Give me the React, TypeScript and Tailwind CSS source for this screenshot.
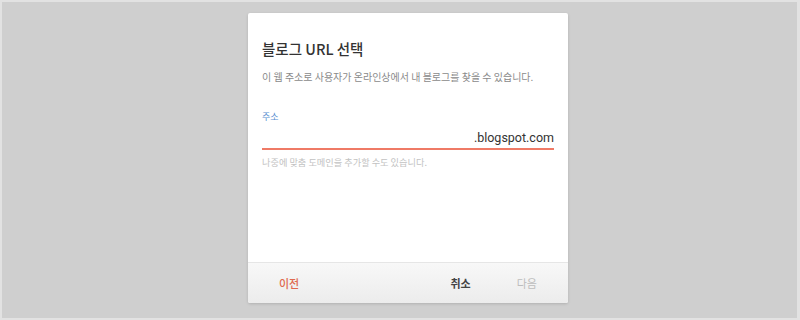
export default function App() {
    return (
        <div className="w-[800px] h-[320px] bg-[#e2e2e2] pt-[2px] pl-[2px] pr-[3px] pb-[2px] font-['Noto_Sans_CJK_KR','Noto_Sans',sans-serif]">
            <div className="w-full h-full bg-[#cfcfcf] pl-[246px] pt-[11px]">
                {/* Dialog */}
                <div className="w-[320px] h-[290px] bg-white flex flex-col shadow-[0_1px_3px_rgba(0,0,0,0.15)] rounded-[2px] overflow-hidden">
                    <div className="flex-1 px-[14px] pt-[26px]">
                        <h2 className="text-[14.5px] leading-[20px] text-[#333] font-medium">블로그 URL 선택</h2>
                        <p className="mt-[11px] text-[10px] leading-[14px] text-[#8a8a8a]">
                            이 웹 주소로 사용자가 온라인상에서 내 블로그를 찾을 수 있습니다.
                        </p>
                        <p className="mt-[27px] text-[9px] leading-[12px] text-[#5a8fd0]">주소</p>
                        <div className="mt-[6px] border-b-2 border-[#ef7a66] flex justify-end pb-[1px]">
                            <span className="text-[12.5px] leading-[18px] text-[#333] font-['Roboto',sans-serif]">.blogspot.com</span>
                        </div>
                        <p className="mt-[6px] text-[9.2px] leading-[12px] text-[#c2c2c2]">나중에 맞춤 도메인을 추가할 수도 있습니다.</p>
                    </div>
                    {/* Footer */}
                    <div className="h-[41px] border-t border-[#e6e6e6] bg-gradient-to-b from-[#f8f8f8] to-[#ececec] flex items-center text-[11px]">
                        <button className="ml-[31px] text-[#e0694f] font-medium">이전</button>
                        <button className="ml-auto text-[#444] font-bold">취소</button>
                        <button className="ml-[46px] mr-[31px] text-[#bdbdbd]">다음</button>
                    </div>
                </div>
            </div>
        </div>
    );
}
